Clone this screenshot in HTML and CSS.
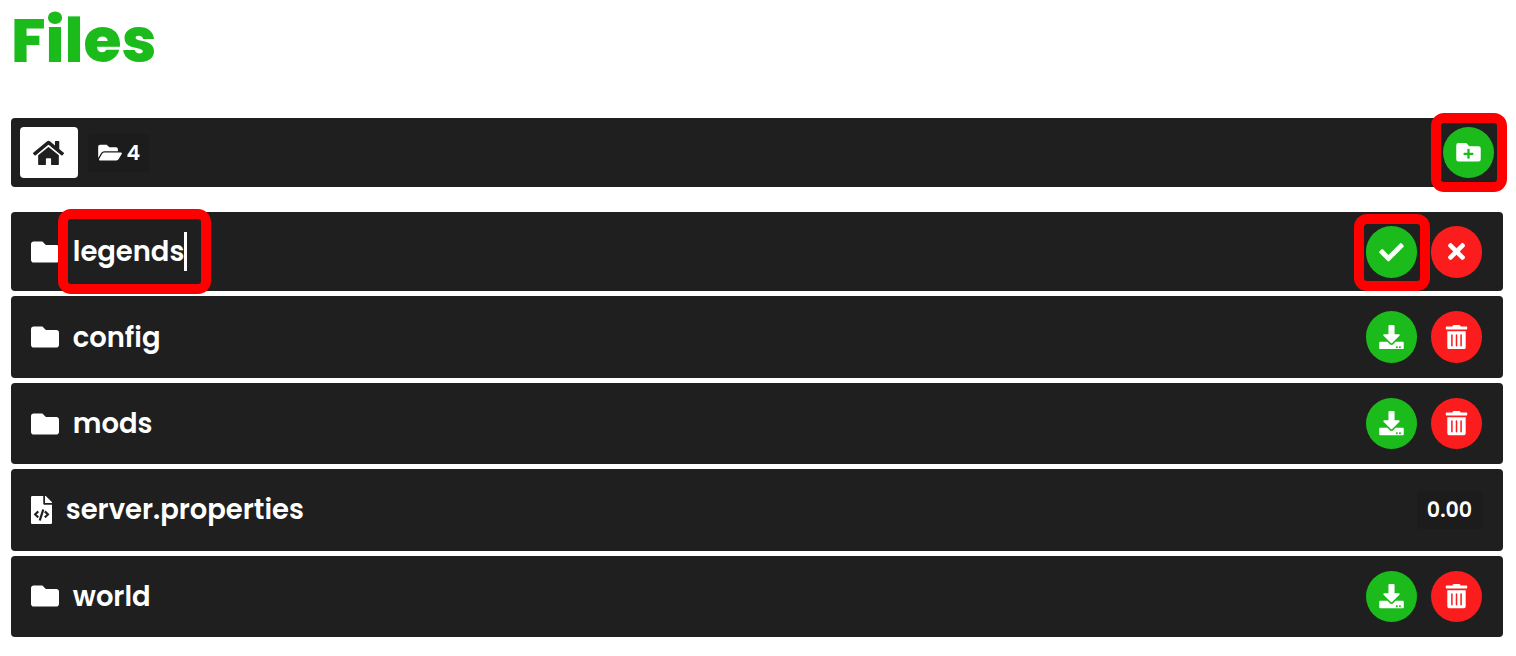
FILE: index.html
```html
<!DOCTYPE html>
<html lang="en">

<head>
    <meta charset="UTF-8">
    <meta name="viewport" content="width=device-width, initial-scale=1.0">
    <title>Files</title>
    <link rel="stylesheet" href="styles.css">
</head>

<body>

    <svg class="sprite">
        <symbol id="home" viewBox="0 0 576 512"><path d="M280.37 148.26L96 300.11V464a16 16 0 0 0 16 16l112.06-.29a16 16 0 0 0 15.92-16V368a16 16 0 0 1 16-16h64a16 16 0 0 1 16 16v95.64a16 16 0 0 0 16 16.05L464 480a16 16 0 0 0 16-16V300L295.67 148.26a12.19 12.19 0 0 0-15.3 0zM571.6 251.47L488 182.56V44.05a12 12 0 0 0-12-12h-56a12 12 0 0 0-12 12v72.61L318.47 43a48 48 0 0 0-61 0L4.34 251.47a12 12 0 0 0-1.6 16.9l25.5 31A12 12 0 0 0 45.15 301l235.22-193.74a12.19 12.19 0 0 1 15.3 0L530.9 301a12 12 0 0 0 16.9-1.6l25.5-31a12 12 0 0 0-1.7-16.93z"/></symbol>
        <symbol id="folder-open" viewBox="0 0 576 512"><path d="M572.694 292.093L500.27 416.248A63.997 63.997 0 0 1 444.989 448H45.025c-18.523 0-30.064-20.093-20.731-36.093l72.424-124.155A64 64 0 0 1 152 256h399.964c18.523 0 30.064 20.093 20.73 36.093zM152 224h328v-48c0-26.51-21.49-48-48-48H272l-64-64H48C21.49 64 0 85.49 0 112v278.046l69.077-118.418C86.214 242.25 117.989 224 152 224z"/></symbol>
        <symbol id="folder" viewBox="0 0 512 512"><path d="M464 128H272l-64-64H48C21.49 64 0 85.49 0 112v288c0 26.51 21.49 48 48 48h416c26.51 0 48-21.49 48-48V176c0-26.51-21.49-48-48-48z"/></symbol>
        <symbol id="folder-plus" viewBox="0 0 512 512"><path d="M464,128H272L208,64H48A48,48,0,0,0,0,112V400a48,48,0,0,0,48,48H464a48,48,0,0,0,48-48V176A48,48,0,0,0,464,128ZM359.5,296a16,16,0,0,1-16,16h-64v64a16,16,0,0,1-16,16h-16a16,16,0,0,1-16-16V312h-64a16,16,0,0,1-16-16V280a16,16,0,0,1,16-16h64V200a16,16,0,0,1,16-16h16a16,16,0,0,1,16,16v64h64a16,16,0,0,1,16,16Z"/></symbol>
        <symbol id="check" viewBox="0 0 512 512"><path d="M173.898 439.404l-166.4-166.4c-9.997-9.997-9.997-26.206 0-36.204l36.203-36.204c9.997-9.998 26.207-9.998 36.204 0L192 312.69 432.095 72.596c9.997-9.997 26.207-9.997 36.204 0l36.203 36.204c9.997 9.997 9.997 26.206 0 36.204l-294.4 294.401c-9.998 9.997-26.207 9.997-36.204-.001z"/></symbol>
        <symbol id="times" viewBox="0 0 352 512"><path d="M242.72 256l100.07-100.07c12.28-12.28 12.28-32.19 0-44.48l-22.24-22.24c-12.28-12.28-32.19-12.28-44.48 0L176 189.28 75.93 89.21c-12.28-12.28-32.19-12.28-44.48 0L9.21 111.45c-12.28 12.28-12.28 32.19 0 44.48L109.28 256 9.21 356.07c-12.28 12.28-12.28 32.19 0 44.48l22.24 22.24c12.28 12.28 32.2 12.28 44.48 0L176 322.72l100.07 100.07c12.28 12.28 32.2 12.28 44.48 0l22.24-22.24c12.28-12.28 12.28-32.19 0-44.48L242.72 256z"/></symbol>
        <symbol id="download" viewBox="0 0 512 512"><path d="M216 0h80c13.3 0 24 10.7 24 24v168h87.7c17.8 0 26.7 21.5 14.1 34.1L269.7 378.3c-7.5 7.5-19.8 7.5-27.3 0L90.1 226.1c-12.6-12.6-3.7-34.1 14.1-34.1H192V24c0-13.3 10.7-24 24-24zm296 376v112c0 13.3-10.7 24-24 24H24c-13.3 0-24-10.7-24-24V376c0-13.3 10.7-24 24-24h146.7l49 49c20.1 20.1 52.5 20.1 72.6 0l49-49H488c13.3 0 24 10.7 24 24zm-124 88c0-11-9-20-20-20s-20 9-20 20 9 20 20 20 20-9 20-20zm64 0c0-11-9-20-20-20s-20 9-20 20 9 20 20 20 20-9 20-20z"/></symbol>
        <symbol id="trash" viewBox="0 0 448 512"><path d="M32 464a48 48 0 0 0 48 48h288a48 48 0 0 0 48-48V128H32zm272-256a16 16 0 0 1 32 0v224a16 16 0 0 1-32 0zm-96 0a16 16 0 0 1 32 0v224a16 16 0 0 1-32 0zm-96 0a16 16 0 0 1 32 0v224a16 16 0 0 1-32 0zM432 32H312l-9.4-18.7A24 24 0 0 0 281.1 0H166.8a23.72 23.72 0 0 0-21.4 13.3L136 32H16A16 16 0 0 0 0 48v32a16 16 0 0 0 16 16h416a16 16 0 0 0 16-16V48a16 16 0 0 0-16-16z"/></symbol>
        <symbol id="file-code" viewBox="0 0 384 512"><path d="M384 121.941V128H256V0h6.059c6.365 0 12.47 2.529 16.971 7.029l97.941 97.941A24.005 24.005 0 0 1 384 121.941zM248 160c-13.2 0-24-10.8-24-24V0H24C10.745 0 0 10.745 0 24v464c0 13.255 10.745 24 24 24h336c13.255 0 24-10.745 24-24V160H248zM123.206 400.505a5.4 5.4 0 0 1-7.633.246l-64.866-60.812a5.4 5.4 0 0 1 0-7.879l64.866-60.812a5.4 5.4 0 0 1 7.633.246l19.579 20.885a5.4 5.4 0 0 1-.372 7.747L101.65 336l40.763 35.874a5.4 5.4 0 0 1 .372 7.747l-19.579 20.884zm51.295 50.479l-27.866-8.97a5.402 5.402 0 0 1-3.483-6.797l61.44-190.937a5.402 5.402 0 0 1 6.797-3.483l27.866 8.97a5.402 5.402 0 0 1 3.483 6.797l-61.44 190.937a5.4 5.4 0 0 1-6.797 3.483zm160.792-111.045l-64.866 60.812a5.4 5.4 0 0 1-7.633-.246l-19.58-20.885a5.4 5.4 0 0 1 .372-7.747L284.35 336l-40.763-35.874a5.4 5.4 0 0 1-.372-7.747l19.58-20.885a5.4 5.4 0 0 1 7.633-.246l64.866 60.812a5.4 5.4 0 0 1-.001 7.879z"/></symbol>
    </svg>

    <h1>Files</h1>

    <div class="toolbar">
        <a class="home"><svg class="icon-home"><use href="#home"/></svg></a>
        <div class="badge count"><svg class="icon-open"><use href="#folder-open"/></svg>4</div>
        <button class="btn green marked mark-add"><svg class="icon"><use href="#folder-plus"/></svg></button>
    </div>

    <div class="files">
        <div class="row editing">
            <svg class="icon-folder"><use href="#folder"/></svg>
            <div class="name marked mark-name">legends<span class="caret"></span></div>
            <div class="actions">
                <button class="btn green marked mark-check"><svg class="icon"><use href="#check"/></svg></button>
                <button class="btn red"><svg class="icon-times"><use href="#times"/></svg></button>
            </div>
        </div>
        <div class="row">
            <svg class="icon-folder"><use href="#folder"/></svg>
            <div class="name">config</div>
            <div class="actions">
                <button class="btn green"><svg class="icon"><use href="#download"/></svg></button>
                <button class="btn red"><svg class="icon"><use href="#trash"/></svg></button>
            </div>
        </div>
        <div class="row">
            <svg class="icon-folder"><use href="#folder"/></svg>
            <div class="name">mods</div>
            <div class="actions">
                <button class="btn green"><svg class="icon"><use href="#download"/></svg></button>
                <button class="btn red"><svg class="icon"><use href="#trash"/></svg></button>
            </div>
        </div>
        <div class="row">
            <svg class="icon-file"><use href="#file-code"/></svg>
            <div class="name">server.properties</div>
            <div class="actions">
                <div class="badge size">0.00</div>
            </div>
        </div>
        <div class="row">
            <svg class="icon-folder"><use href="#folder"/></svg>
            <div class="name">world</div>
            <div class="actions">
                <button class="btn green"><svg class="icon"><use href="#download"/></svg></button>
                <button class="btn red"><svg class="icon"><use href="#trash"/></svg></button>
            </div>
        </div>
    </div>

</body>

</html>
```
FILE: styles.css
```css
* {
    box-sizing: border-box;
}

body {
    margin: 0;
    padding: 0 13px 0 11px;
    background-color: white;
    color: white;
    font-family: Poppins, Inter, sans-serif;
    font-weight: 600;
    overflow: hidden;
}

svg {
    display: block;
    flex-shrink: 0;
    fill: currentColor;
}

.sprite {
    display: none;
}

h1 {
    height: 118px;
    margin: 0;
    color: #1cbb1c;
    font-size: 61.7px;
    font-weight: 800;
    line-height: 82px;
}

.toolbar {
    display: flex;
    align-items: center;
    height: 69px;
    padding: 0 9px;
    margin-bottom: 25px;
    border-radius: 4px;
    background-color: #1f1f1f;
}

.home {
    display: flex;
    align-items: center;
    justify-content: center;
    width: 58px;
    height: 51px;
    padding-right: 1px;
    border-radius: 4px;
    background-color: white;
    color: #1f1f1f;
}

.badge {
    display: flex;
    align-items: center;
    height: 38px;
    padding: 0 10px;
    border-radius: 4px;
    background-color: #1c1c1c;
    font-size: 20.6px;
}

.count {
    gap: 4.5px;
    width: 62px;
    margin-left: 10px;
}

.size {
    justify-content: center;
    width: 65px;
    padding: 0 0 1px;
}

.btn {
    display: flex;
    align-items: center;
    justify-content: center;
    width: 51px;
    height: 51px;
    padding: 0;
    border: none;
    border-radius: 50%;
    color: white;
}

.toolbar .btn {
    margin-left: auto;
}

.green {
    background-color: #1cbb1c;
}

.red {
    background-color: #fb1d1d;
}

.files {
    display: flex;
    flex-direction: column;
    gap: 5px;
}

.row {
    display: flex;
    align-items: center;
    height: 81.43px;
    padding: 0.2px 21px 0 20.4px;
    border-radius: 4px;
    background-color: #1f1f1f;
}

.row .btn {
    height: 51.4px;
}

.editing {
    height: 79.3px;
    padding-top: 0.5px;
}

.name {
    display: flex;
    align-items: center;
    margin-left: 13.4px;
    font-size: 27.4px;
    line-height: 39px;
}

.actions {
    display: flex;
    gap: 14px;
    margin-left: auto;
}

.caret {
    width: 3px;
    height: 39px;
    background-color: white;
}

.icon {
    width: 25px;
    height: 24.5px;
}

.icon-times {
    width: 17px;
    height: 25px;
}

.icon-home {
    width: 31px;
    height: 28px;
}

.icon-open {
    width: 24px;
    height: 21px;
}

.icon-folder {
    width: 28px;
    height: 28px;
}

.icon-file {
    width: 21px;
    height: 28px;
}

/* red highlight frames */
.marked {
    position: relative;
}

.marked::after {
    content: "";
    position: absolute;
    border: 10px solid red;
    border-radius: 13px;
}

.mark-add::after {
    inset: -14px -13px -14px -12px;
}

.mark-name::after {
    inset: -23px -24px -23px -15px;
}

.mark-check::after {
    inset: -12px -13px -13px -12px;
}
```
